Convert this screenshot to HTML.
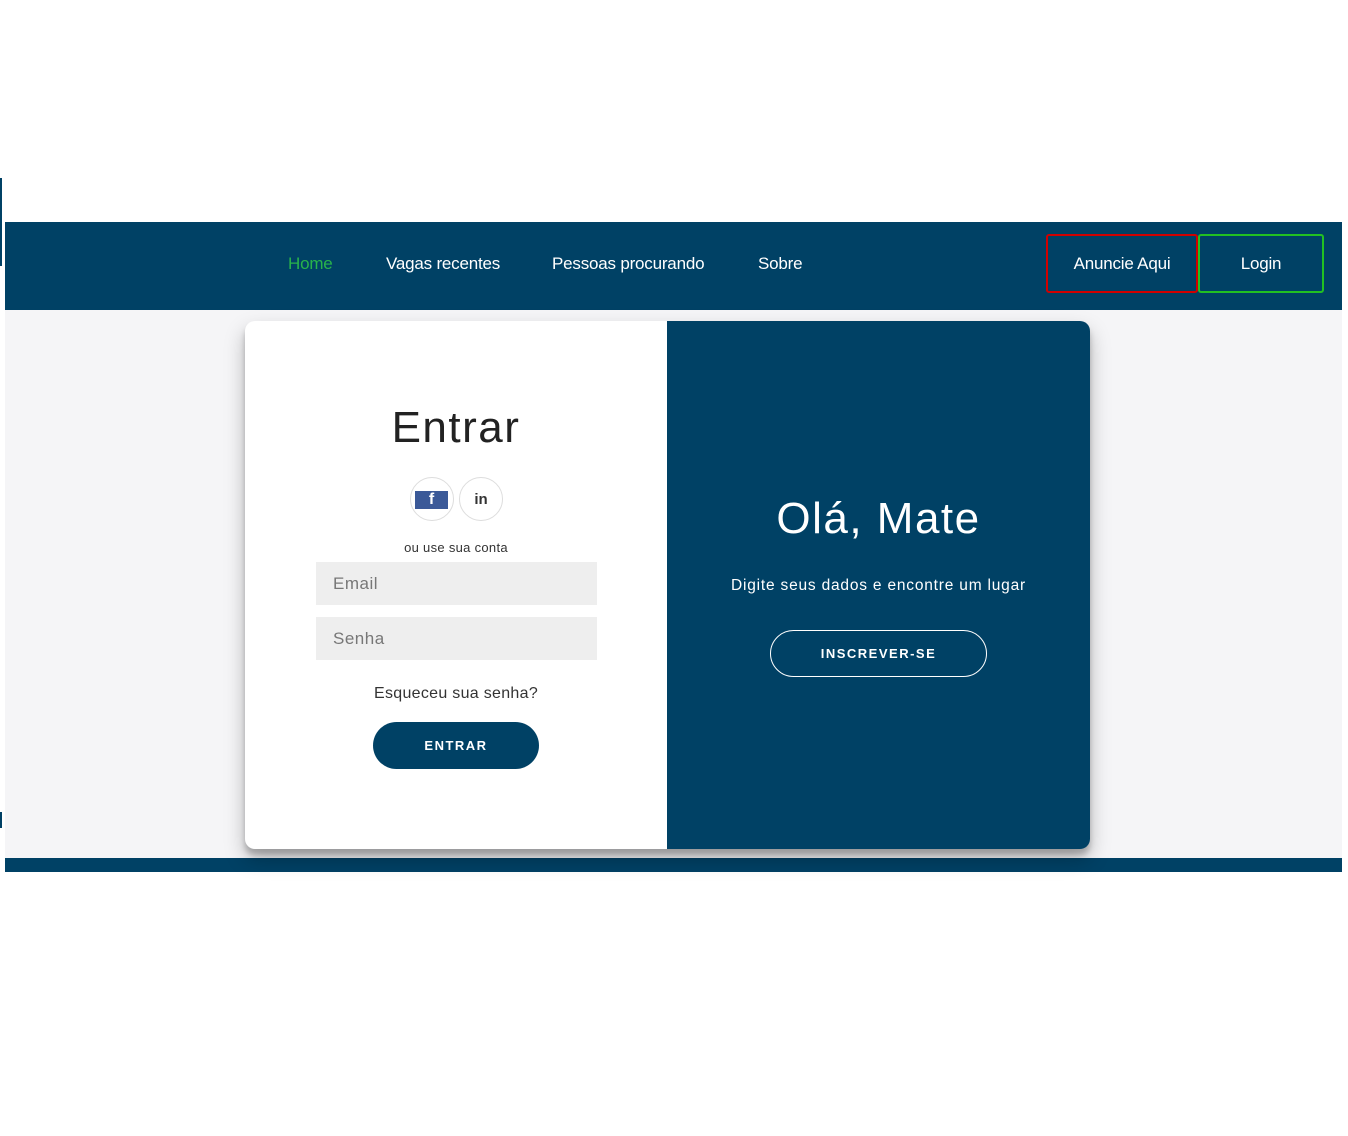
<!DOCTYPE html>
<html><head><meta charset="utf-8"><style>
*{box-sizing:border-box;margin:0;padding:0}
body{width:1348px;height:1136px;background:#fff;position:relative;font-family:"Liberation Sans","DejaVu Sans",sans-serif;overflow:hidden}
.vline{position:absolute;left:0;top:178px;width:2px;height:88px;background:#004165}
.vline2{position:absolute;left:0;top:812px;width:2px;height:16px;background:#004165}
nav{position:absolute;left:5px;top:222px;width:1337px;height:88px;background:#004165}
nav a{position:absolute;top:32px;color:#fff;font-size:17px;text-decoration:none;letter-spacing:-.2px}
.btn{position:absolute;top:12px;height:59px;border:2px solid;border-radius:3px;color:#fff;font-size:17px;display:flex;align-items:center;justify-content:center;letter-spacing:-.2px}
.band{position:absolute;left:5px;top:310px;width:1337px;height:548px;background:#f5f5f7}
.foot{position:absolute;left:5px;top:858px;width:1337px;height:14px;background:#004165}
.card{position:absolute;left:245px;top:321px;width:845px;height:528px;border-radius:10px;background:#fff;box-shadow:0 10px 20px rgba(0,0,0,.25),0 6px 6px rgba(0,0,0,.2);overflow:hidden}
.right{position:absolute;left:422px;top:0;width:423px;height:528px;background:#004165;color:#fff;text-align:center}
.c{position:absolute;text-align:center;width:100%}
.soc{position:absolute;top:156px;width:44px;height:44px;border:1px solid #ddd;border-radius:50%}
.inp{position:absolute;left:71px;width:281px;height:43px;background:#eee;color:#777;font-size:17px;padding:12px 17px;letter-spacing:.5px}
.pill{position:absolute;border-radius:24px;display:flex;align-items:center;justify-content:center;font-weight:bold;font-size:13px;letter-spacing:1.5px}
</style></head><body>
<div class="vline"></div><div class="vline2"></div>
<nav>
<a style="left:283px;color:#28b34b">Home</a>
<a style="left:381px">Vagas recentes</a>
<a style="left:547px">Pessoas procurando</a>
<a style="left:753px">Sobre</a>
<div class="btn" style="left:1041px;width:152px;border-color:#d10000">Anuncie Aqui</div>
<div class="btn" style="left:1193px;width:126px;border-color:#22c022">Login</div>
</nav>
<div class="band"></div>
<div class="foot"></div>
<div class="card">
<div class="c" style="left:0;width:422px;top:82px;font-size:44px;color:#222;letter-spacing:1.5px">Entrar</div>
<div class="soc" style="left:165px"><div style="position:absolute;left:4px;top:13px;width:33px;height:18px;background:#3b5998;color:#fff;font-weight:bold;font-size:16px;text-align:center;line-height:18px">f</div></div>
<div class="soc" style="left:214px;text-align:center;line-height:44px;font-weight:bold;font-size:15px;color:#333">in</div>
<div class="c" style="left:0;width:422px;top:219px;font-size:13px;color:#333;letter-spacing:.3px">ou use sua conta</div>
<div class="inp" style="top:241px">Email</div>
<div class="inp" style="top:296px">Senha</div>
<div class="c" style="left:0;width:422px;top:364px;font-size:16px;color:#333;letter-spacing:.3px">Esqueceu sua senha?</div>
<div class="pill" style="left:128px;top:401px;width:166px;height:47px;background:#004165;color:#fff">ENTRAR</div>
<div class="right">
<div class="c" style="top:173px;font-size:44px;letter-spacing:1.5px">Olá, Mate</div>
<div class="c" style="top:256px;font-size:15.5px;letter-spacing:.8px">Digite seus dados e encontre um lugar</div>
<div class="pill" style="left:103px;top:309px;width:217px;height:47px;border:1px solid #fff;color:#fff">INSCREVER-SE</div>
</div>
</div>
</body></html>
